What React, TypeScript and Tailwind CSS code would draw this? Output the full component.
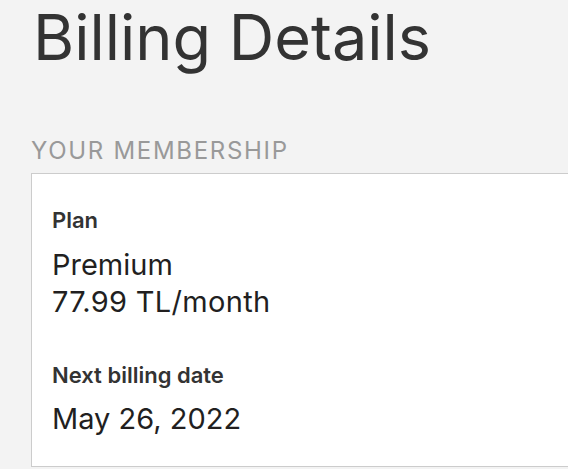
export default function App() {
  return (
    <div className="min-h-[469px] w-[568px] overflow-hidden bg-[#f3f3f3] pl-[31px]" style={{ fontFamily: "Inter, 'Liberation Sans', sans-serif" }}>
      <h1 className="-mt-[2px] pl-[2px] text-[63px] leading-[78px] font-normal text-[#333]">Billing Details</h1>
      <div className="mt-[60px] text-[24px] leading-[30px] tracking-[1.7px] text-[#999] uppercase">Your Membership</div>
      <div className="mt-[7px] w-[600px] border border-[#ccc] bg-white px-[20px] pt-[32px] pb-[29px] text-[#333]">
        <div className="text-[22px] leading-[28px] font-semibold">Plan</div>
        <div className="mt-[12px] text-[29px] leading-[37px] text-[#221f1f]">Premium</div>
        <div className="text-[29px] leading-[37px] tracking-[0.3px] text-[#221f1f]">77.99 TL/month</div>
        <div className="mt-[41px] text-[22px] leading-[28px] font-semibold">Next billing date</div>
        <div className="mt-[11px] text-[29px] leading-[37px] text-[#221f1f]">May 26, 2022</div>
      </div>
    </div>
  );
}
